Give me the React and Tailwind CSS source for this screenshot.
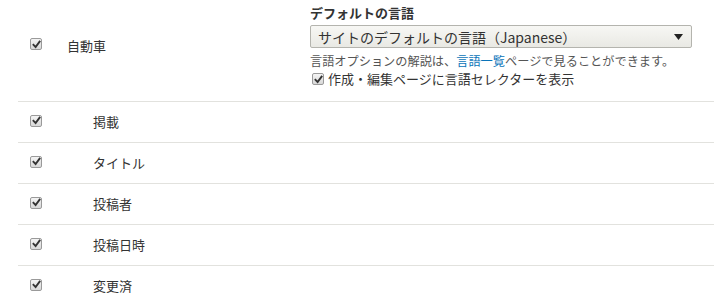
import React from 'react';

const font = { fontFamily: '"Noto Sans CJK JP", "Noto Sans", sans-serif' };

const Check = () => (
  <span className="inline-flex h-[12px] w-[12px] shrink-0 items-center justify-center rounded-[2px] border border-[#9a9a9a] bg-gradient-to-b from-[#f4f4f4] to-[#d8d8d8]">
    <svg width="9" height="9" viewBox="0 0 9 9">
      <path d="M1.5 4.8 L3.6 7 L7.6 1.6" fill="none" stroke="#333" strokeWidth="1.9" strokeLinecap="square" />
    </svg>
  </span>
);

const rows = ['掲載', 'タイトル', '投稿者', '投稿日時', '変更済'];

export default function App() {
  return (
    <div className="h-[303px] w-[714px] overflow-hidden bg-white text-[#333]" style={font}>
      <div className="ml-[18px]">
        <div className="flex h-[102px] border-b border-[#e2e2de]">
          <div className="flex w-[292px] items-center pb-[10px]">
            <div className="mb-[3px] flex pl-[12px]">
              <Check />
            </div>
            <span className="ml-[25px] text-[13px]">自動車</span>
          </div>
          <div className="flex flex-col pt-[3px]">
            <div className="text-[13px] font-bold leading-[20px]">デフォルトの言語</div>
            <div className="mt-[2px] flex h-[23px] w-[382px] items-center justify-between rounded-[2px] border border-[#b4b4ae] bg-gradient-to-b from-[#f7f7f4] to-[#e9e9e4] pl-[7px] pr-[8px]">
              <span className="text-[14px] leading-none">サイトのデフォルトの言語（Japanese）</span>
              <svg width="9" height="6" viewBox="0 0 9 6">
                <path d="M0 0 H9 L4.5 6 Z" fill="#222" />
              </svg>
            </div>
            <div className="mt-[4px] text-[12.2px] leading-[18px] text-[#555]">
              言語オプションの解説は、<span className="text-[#0a74b9]">言語一覧</span>ページで見ることができます。
            </div>
            <div className="flex items-center">
              <span className="ml-[2px] flex"><Check /></span>
              <span className="ml-[4px] text-[13px] leading-[18px]">作成・編集ページに言語セレクターを表示</span>
            </div>
          </div>
        </div>
        {rows.map((r) => (
          <div key={r} className="flex h-[41px] items-center border-b border-[#e2e2de]">
            <div className="mb-[3px] flex pl-[12px]">
              <Check />
            </div>
            <span className="ml-[51px] text-[13px]">{r}</span>
          </div>
        ))}
      </div>
    </div>
  );
}
